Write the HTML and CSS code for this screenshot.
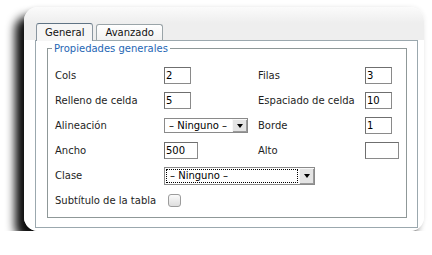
FILE: index.html
```html
<!DOCTYPE html>
<html lang="es">
<head>
    <meta charset="UTF-8">
    <title>Propiedades de la tabla</title>
    <link rel="stylesheet" href="styles.css">
</head>
<body>

<div class="dialog">
    <div class="tabs">
        <div class="tab active">General</div>
        <div class="tab">Avanzado</div>
    </div>

    <div class="panel">
        <fieldset class="props">
            <legend>Propiedades generales</legend>
            <div class="grid">
                <label>Cols</label>
                <input type="text" class="num" value="2">
                <label>Filas</label>
                <input type="text" class="num" value="3">

                <label>Relleno de celda</label>
                <input type="text" class="num" value="5">
                <label>Espaciado de celda</label>
                <input type="text" class="num" value="10">

                <label>Alineación</label>
                <div class="select small"><span class="value">– Ninguno –</span><span class="arrow"></span></div>
                <label>Borde</label>
                <input type="text" class="num" value="1">

                <label>Ancho</label>
                <input type="text" class="wide" value="500">
                <label>Alto</label>
                <input type="text" class="wide" value="">

                <label>Clase</label>
                <div class="select large"><span class="value focus">– Ninguno –</span><span class="arrow"></span></div>

                <label class="first">Subtítulo de la tabla</label>
                <span class="check"></span>
            </div>
        </fieldset>
    </div>
</div>

</body>
</html>
```

FILE: styles.css
```css
body {
    margin: 0;
    background: #ffffff;
    font-family: "DejaVu Sans", sans-serif;
    font-size: 10px;
    color: #1e1e1e;
}
.dialog {
    margin: 7px 0 0 24px;
    width: 400px;
    height: 224px;
    border-radius: 14px;
    background: linear-gradient(to bottom, #fbfbfb 0, #eeeeee 16px, #eeeeee 33px, #ffffff 33px);
    box-shadow: -9px 9px 10px rgba(0, 0, 0, 0.95), 0 0 5px rgba(0, 0, 0, 0.08);
    display: flex;
    flex-direction: column;
}
.tabs {
    display: flex;
    align-items: flex-end;
    gap: 3px;
    padding: 16px 0 0 12px;
    height: 17px;
}
.tab {
    height: 15px;
    line-height: 15px;
    padding: 0 8px 0 8px;
    border: 1px solid #9aa4a8;
    border-bottom: none;
    border-radius: 3px 3px 0 0;
    background: linear-gradient(to bottom, #ffffff, #f1f1f1);
    color: #111;
}
.tab.active {
    border-color: #8a96a0;
    border-top: 1px solid #5f7384;
    background: #f6f6f6;
    position: relative;
    z-index: 1;
    margin-bottom: -1px;
    height: 17px;
    line-height: 17px;
}
.panel {
    flex: 1;
    margin: 0 6px 3px 11px;
    border: 1px solid #9ba8ae;
    background: #ffffff;
    padding: 2px 10px 8px 11px;
}
.props {
    margin: 0;
    border: 1px solid #8f9898;
    padding: 9px 7px 5px 7px;
    height: 175px;
    box-sizing: border-box;
}
.props legend {
    color: #2566b4;
    padding: 0 2px;
    margin-left: -3px;
    font-size: 10px;
}
.grid {
    display: grid;
    grid-template-columns: 109px 94px 107px auto;
    grid-auto-rows: 25px;
    align-items: center;
}
.grid .first {
    grid-column: 1;
}
input {
    font-family: "DejaVu Sans", sans-serif;
    font-size: 10px;
    margin: 0;
    padding: 0 1px;
    height: 17px;
    box-sizing: border-box;
    border: 1px solid #8a8a8a;
    border-top-color: #6f6f6f;
    border-left-color: #6f6f6f;
    color: #000;
    background: #fff;
}
.num {
    width: 27px;
}
.wide {
    width: 34px;
}
.select {
    display: flex;
    box-sizing: border-box;
    border: 1px solid #8a8a8a;
    background: #fff;
    align-items: stretch;
}
.select.small {
    width: 84px;
    height: 15px;
}
.select.large {
    grid-column: 2 / span 2;
    width: 151px;
    height: 18px;
}
.select .value {
    flex: 1;
    padding-left: 4px;
    display: flex;
    align-items: center;
    color: #000;
}
.select .value.focus {
    margin: 1px;
    padding-left: 3px;
    border: 1px dotted #000;
}
.select .arrow {
    width: 14px;
    background: #e4e4e4;
    border-left: 1px solid #f8f8f8;
    border-top: 1px solid #f8f8f8;
    box-shadow: inset -1px -1px 0 #9a9a9a;
    display: flex;
    align-items: center;
    justify-content: center;
}
.select .arrow::after {
    content: "";
    border-left: 3px solid transparent;
    border-right: 3px solid transparent;
    border-top: 4px solid #000;
}
.check {
    width: 13px;
    height: 13px;
    margin-left: 4px;
    box-sizing: border-box;
    border: 1px solid #9c9c9c;
    border-radius: 3px;
    background: linear-gradient(to bottom, #fafafa, #dedede);
}
```
